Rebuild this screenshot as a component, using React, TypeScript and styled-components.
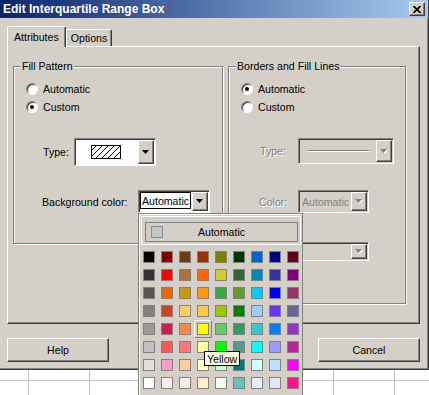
import React from 'react';
import styled, { createGlobalStyle } from 'styled-components';

const FACE = '#d4d0c8';

const GlobalStyle = createGlobalStyle`
  html, body {
    margin: 0;
    padding: 0;
  }
  body {
    font-family: "Liberation Sans", Arial, sans-serif;
    font-size: 10.6px;
    color: #000;
    background: #fff;
  }
  * {
    box-sizing: border-box;
  }
`;

const Screen = styled.div`
  position: relative;
  width: 429px;
  height: 395px;
  overflow: hidden;
  display: flex;
  flex-direction: column;
  background: #fff;
`;

const Dialog = styled.div`
  flex: none;
  width: 429px;
  height: 370px;
  display: flex;
  flex-direction: column;
  background: ${FACE};
  border-right: 1px solid #404040;
  border-bottom: 1px solid #404040;
  box-shadow: inset -1px -1px 0 #808080;
`;

const TitleBar = styled.div`
  height: 18px;
  display: flex;
  align-items: center;
  justify-content: space-between;
  padding: 0 3px;
  background: linear-gradient(to right, #0a246a, #a6caf0);
  color: #fff;
  font-weight: bold;
  font-size: 12px;
`;

const CloseButton = styled.div`
  width: 16px;
  height: 14px;
  display: flex;
  align-items: center;
  justify-content: center;
  background: ${FACE};
  border: 1px solid;
  border-color: #fff #404040 #404040 #fff;
  box-shadow: inset -1px -1px 0 #808080;
`;

const Body = styled.div`
  flex: 1;
  display: flex;
  flex-direction: column;
  padding: 8px 8px 0 7px;
`;

const Tabs = styled.div`
  position: relative;
  z-index: 1;
  height: 20px;
  display: flex;
  align-items: flex-end;
`;

const Tab = styled.div<{ $active?: boolean }>`
  height: ${(p) => (p.$active ? 21 : 17)}px;
  margin-bottom: ${(p) => (p.$active ? -1 : 0)}px;
  padding: 0 ${(p) => (p.$active ? 6 : 4)}px;
  display: flex;
  align-items: center;
  background: ${FACE};
  border-top: 1px solid #fff;
  border-left: 1px solid #fff;
  border-right: 1px solid #404040;
  border-radius: 2px 2px 0 0;
  box-shadow: inset -1px 0 0 #808080;
`;

const Panel = styled.div`
  height: 278px;
  display: flex;
  align-items: flex-start;
  gap: 5px;
  padding: 19px 0 0 5px;
  border: 1px solid;
  border-color: #fff #404040 #404040 #fff;
  box-shadow: inset -1px -1px 0 #808080;
`;

const Group = styled.div<{ $w: number; $h: number }>`
  position: relative;
  width: ${(p) => p.$w}px;
  height: ${(p) => p.$h}px;
  display: flex;
  flex-direction: column;
  padding: 13px 0 0 12px;
  border: 1px solid #808080;
  box-shadow: 1px 1px 0 #fff, inset 1px 1px 0 #fff;
`;

const Legend = styled.span`
  position: absolute;
  top: -7px;
  left: 7px;
  padding: 0 1px;
  line-height: 13px;
  background: ${FACE};
`;

const RadioRow = styled.div`
  height: 18px;
  display: flex;
  align-items: center;
  gap: 5px;
`;

const RadioDot = styled.span<{ $checked?: boolean }>`
  position: relative;
  flex: none;
  width: 12px;
  height: 12px;
  border-radius: 50%;
  background: #fff;
  border: 1px solid;
  border-color: #808080 #fff #fff #808080;
  box-shadow: inset 1px 1px 0 #404040;

  &::after {
    content: '';
    display: ${(p) => (p.$checked ? 'block' : 'none')};
    position: absolute;
    left: 3px;
    top: 3px;
    width: 4px;
    height: 4px;
    border-radius: 50%;
    background: #000;
  }
`;

const FieldRow = styled.div<{ $top: number; $indent: number }>`
  display: flex;
  align-items: center;
  margin-top: ${(p) => p.$top}px;
  padding-left: ${(p) => p.$indent}px;
`;

const Label = styled.span<{ $w: number; $disabled?: boolean }>`
  flex: none;
  width: ${(p) => p.$w}px;
  color: ${(p) => (p.$disabled ? '#808080' : '#000')};
  text-shadow: ${(p) => (p.$disabled ? '1px 1px 0 #fff' : 'none')};
`;

const Field = styled.div<{ $w: number; $h: number; $disabled?: boolean }>`
  flex: none;
  display: flex;
  width: ${(p) => p.$w}px;
  height: ${(p) => p.$h}px;
  padding: 1px;
  border: 1px solid;
  border-color: #808080 #fff #fff #808080;
  box-shadow: inset 1px 1px 0 #404040;
  background: ${(p) => (p.$disabled ? FACE : '#fff')};
`;

const FieldContent = styled.div<{ $pad: number; $disabled?: boolean }>`
  flex: 1;
  display: flex;
  align-items: center;
  padding-left: ${(p) => p.$pad}px;
  color: ${(p) => (p.$disabled ? '#808080' : '#000')};
`;

const EditBox = styled.div`
  flex: 1;
  display: flex;
  align-items: center;
  margin: 0 1px 2px 0;
  padding-left: 1px;
  background: #fff;
  border: 1px solid #000;
`;

const LineSample = styled.div`
  width: 62px;
  height: 2px;
  border-top: 1px solid #808080;
  border-bottom: 1px solid #fff;
`;

const ArrowButton = styled.div`
  flex: none;
  width: 16px;
  display: flex;
  align-items: center;
  justify-content: center;
  background: ${FACE};
  border: 1px solid;
  border-color: #fff #404040 #404040 #fff;
  box-shadow: inset -1px -1px 0 #808080;
`;

const ButtonRow = styled.div`
  display: flex;
  justify-content: space-between;
  margin-top: 14px;
`;

const PushButton = styled.div`
  width: 102px;
  height: 24px;
  display: flex;
  align-items: center;
  justify-content: center;
  border: 1px solid;
  border-color: #fff #404040 #404040 #fff;
  box-shadow: inset -1px -1px 0 #808080;
`;

const Sheet = styled.div`
  flex: 1;
  background-color: #fff;
  background-image: linear-gradient(to right, #c0c0c0 1px, transparent 1px),
    linear-gradient(to bottom, #c0c0c0 1px, transparent 1px);
  background-size: 61px 100%, 100% 17px;
  background-position: 28px 0, 0 10px;
`;

const Popup = styled.div`
  position: absolute;
  z-index: 5;
  left: 138px;
  top: 213px;
  width: 165px;
  height: 190px;
  padding: 2px 0 0 2px;
  background: ${FACE};
  border: 1px solid #808080;
  box-shadow: inset 1px 1px 0 #fff;
`;

const AutoFrame = styled.div`
  width: 160px;
  height: 29px;
  padding: 5px 2px 2px 3px;
  border: 1px solid #fff;
`;

const AutoButton = styled.div`
  height: 20px;
  display: flex;
  align-items: center;
  padding: 0 5px;
  border: 1px solid #808080;
`;

const AutoSwatch = styled.span`
  flex: none;
  width: 12px;
  height: 12px;
  background: #c4c8cc;
  border: 1px solid #8c8c8c;
`;

const AutoText = styled.span`
  flex: 1;
  text-align: center;
  padding-right: 12px;
`;

const ColorGrid = styled.div`
  display: grid;
  grid-template-columns: repeat(9, 12px);
  grid-auto-rows: 12px;
  gap: 6px;
  margin: 6px 0 0 2px;
`;

const Swatch = styled.span<{ $hover?: boolean }>`
  position: relative;
  border: 1px solid #808080;

  &::before {
    content: '';
    display: ${(p) => (p.$hover ? 'block' : 'none')};
    position: absolute;
    inset: -4px;
    border: 1px solid;
    border-color: #fff #808080 #808080 #fff;
  }
`;

const Tooltip = styled.div`
  position: absolute;
  left: 65px;
  top: 137px;
  height: 15px;
  padding: 0 2px;
  display: flex;
  align-items: center;
  background: #ffffe1;
  border: 1px solid #000;
  white-space: nowrap;
`;

const palette = [
  ['#000000', '#800000', '#6a3b14', '#993300', '#808000', '#003300', '#0066cc', '#000080', '#660022'],
  ['#333333', '#ff0000', '#b0703c', '#ff6600', '#cccc33', '#336633', '#0088bb', '#333399', '#800080'],
  ['#555555', '#e86800', '#cc9900', '#ff9900', '#33aa44', '#669933', '#00ccff', '#0000ff', '#993366'],
  ['#808080', '#cc4422', '#ffcc66', '#ffc840', '#99cc00', '#008000', '#99ccff', '#6633ff', '#666699'],
  ['#999999', '#cc1f4f', '#ff8844', '#ffff00', '#66cc66', '#339966', '#33cccc', '#0080ff', '#9933cc'],
  ['#c0c0c0', '#ff5555', '#ff7777', '#ffff99', '#00ff00', '#559988', '#00ffff', '#9999ff', '#bb2299'],
  ['#e0e0e0', '#ff99cc', '#ffcc99', '#ffffcc', '#ccffcc', '#007b7b', '#ccffff', '#bbddff', '#ff00ff'],
  ['#ffffff', '#ffeeee', '#f0f0e8', '#ffeecc', '#eeffee', '#66c4b8', '#e6eeff', '#e4e4ff', '#ff1188'],
];

const Arrow: React.FC<{ disabled?: boolean }> = ({ disabled }) => (
  <svg width="8" height="5" viewBox="0 0 8 5">
    {disabled && <polygon points="1,1 8,1 4.5,5" fill="#fff" />}
    <polygon points="0,0 7,0 3.5,4" fill={disabled ? '#808080' : '#000'} />
  </svg>
);

const CloseGlyph = () => (
  <svg width="8" height="7" viewBox="0 0 8 7">
    <path d="M0.5 0 L7.5 7 M7.5 0 L0.5 7" stroke="#000" strokeWidth="1.7" />
  </svg>
);

const HatchSwatch = () => (
  <svg width="30" height="14" viewBox="0 0 30 14">
    <defs>
      <clipPath id="hatch-clip">
        <rect x="0" y="0" width="30" height="14" />
      </clipPath>
    </defs>
    <rect x="0.5" y="0.5" width="29" height="13" fill="#fff" stroke="#000" />
    <g clipPath="url(#hatch-clip)" stroke="#000" strokeWidth="1">
      {[-8, -2, 4, 10, 16, 22].map((x) => (
        <line key={x} x1={x} y1={14} x2={x + 14} y2={0} />
      ))}
    </g>
  </svg>
);

const Radio: React.FC<{ label: string; checked?: boolean }> = ({ label, checked }) => (
  <RadioRow>
    <RadioDot $checked={checked} />
    {label}
  </RadioRow>
);

export default function App() {
  return (
    <Screen>
      <GlobalStyle />
      <Dialog>
        <TitleBar>
          <span>Edit Interquartile Range Box</span>
          <CloseButton>
            <CloseGlyph />
          </CloseButton>
        </TitleBar>
        <Body>
          <Tabs>
            <Tab $active>Attributes</Tab>
            <Tab>Options</Tab>
          </Tabs>
          <Panel>
            <Group $w={210} $h={178}>
              <Legend>Fill Pattern</Legend>
              <Radio label="Automatic" />
              <Radio label="Custom" checked />
              <FieldRow $top={22} $indent={17}>
                <Label $w={31}>Type:</Label>
                <Field $w={82} $h={28}>
                  <FieldContent $pad={15}>
                    <HatchSwatch />
                  </FieldContent>
                  <ArrowButton>
                    <Arrow />
                  </ArrowButton>
                </Field>
              </FieldRow>
              <FieldRow $top={24} $indent={16}>
                <Label $w={96}>Background color:</Label>
                <Field $w={72} $h={23}>
                  <EditBox>Automatic</EditBox>
                  <ArrowButton>
                    <Arrow />
                  </ArrowButton>
                </Field>
              </FieldRow>
            </Group>
            <Group $w={178} $h={238}>
              <Legend>Borders and Fill Lines</Legend>
              <Radio label="Automatic" checked />
              <Radio label="Custom" />
              <FieldRow $top={22} $indent={19}>
                <Label $w={38} $disabled>
                  Type:
                </Label>
                <Field $w={96} $h={26} $disabled>
                  <FieldContent $pad={7}>
                    <LineSample />
                  </FieldContent>
                  <ArrowButton>
                    <Arrow disabled />
                  </ArrowButton>
                </Field>
              </FieldRow>
              <FieldRow $top={26} $indent={18}>
                <Label $w={39} $disabled>
                  Color:
                </Label>
                <Field $w={71} $h={23} $disabled>
                  <FieldContent $pad={2} $disabled>
                    Automatic
                  </FieldContent>
                  <ArrowButton>
                    <Arrow disabled />
                  </ArrowButton>
                </Field>
              </FieldRow>
              <FieldRow $top={29} $indent={18}>
                <Label $w={39} $disabled />
                <Field $w={71} $h={19} $disabled>
                  <FieldContent $pad={2} />
                  <ArrowButton>
                    <Arrow disabled />
                  </ArrowButton>
                </Field>
              </FieldRow>
            </Group>
          </Panel>
          <ButtonRow>
            <PushButton>Help</PushButton>
            <PushButton>Cancel</PushButton>
          </ButtonRow>
        </Body>
      </Dialog>
      <Sheet />
      <Popup>
        <AutoFrame>
          <AutoButton>
            <AutoSwatch />
            <AutoText>Automatic</AutoText>
          </AutoButton>
        </AutoFrame>
        <ColorGrid>
          {palette.flatMap((row, r) =>
            row.map((color, c) => (
              <Swatch key={`${r}-${c}`} $hover={r === 4 && c === 3} style={{ background: color }} />
            ))
          )}
        </ColorGrid>
        <Tooltip>Yellow</Tooltip>
      </Popup>
    </Screen>
  );
}
